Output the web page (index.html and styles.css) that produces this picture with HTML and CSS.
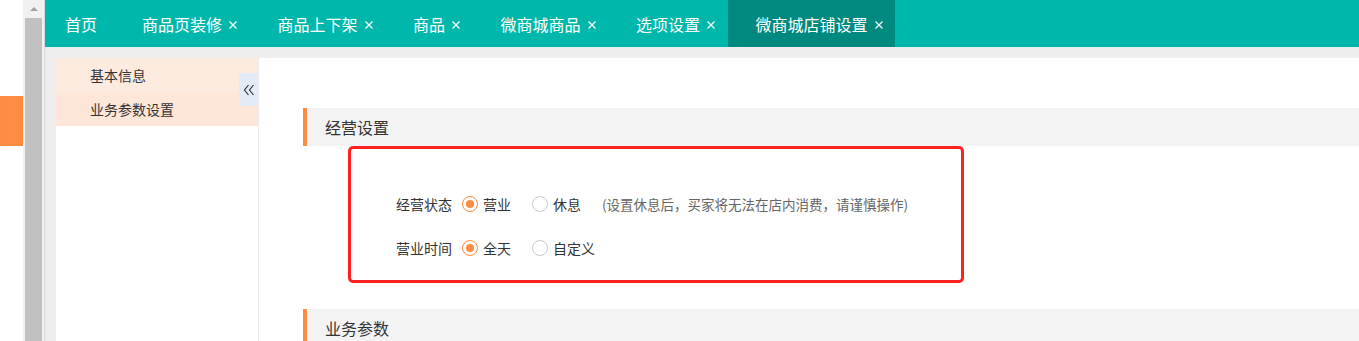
FILE: index.html
```html
<!DOCTYPE html>
<html lang="zh-CN">
<head>
    <meta charset="UTF-8">
    <meta name="viewport" content="width=device-width, initial-scale=1.0">
    <title>微商城店铺设置</title>
    <link rel="stylesheet" href="styles.css">
</head>
<body>
    <div class="page">
        <!-- outer frame edge -->
        <div class="rail">
            <div class="rail-mark"></div>
        </div>
        <div class="scrollbar">
            <div class="scroll-arrow"></div>
            <div class="scroll-thumb"></div>
        </div>

        <div class="main">
            <nav class="tabs">
                <div class="tab home">首页</div>
                <div class="tab">商品页装修<svg class="close" viewBox="0 0 8 8"><path d="M0.5 0.5 7.5 7.5 M7.5 0.5 0.5 7.5"/></svg></div>
                <div class="tab">商品上下架<svg class="close" viewBox="0 0 8 8"><path d="M0.5 0.5 7.5 7.5 M7.5 0.5 0.5 7.5"/></svg></div>
                <div class="tab">商品<svg class="close" viewBox="0 0 8 8"><path d="M0.5 0.5 7.5 7.5 M7.5 0.5 0.5 7.5"/></svg></div>
                <div class="tab">微商城商品<svg class="close" viewBox="0 0 8 8"><path d="M0.5 0.5 7.5 7.5 M7.5 0.5 0.5 7.5"/></svg></div>
                <div class="tab">选项设置<svg class="close" viewBox="0 0 8 8"><path d="M0.5 0.5 7.5 7.5 M7.5 0.5 0.5 7.5"/></svg></div>
                <div class="tab active">微商城店铺设置<svg class="close" viewBox="0 0 8 8"><path d="M0.5 0.5 7.5 7.5 M7.5 0.5 0.5 7.5"/></svg></div>
            </nav>

            <div class="workspace">
                <aside class="sidebar">
                    <div class="side-item">基本信息</div>
                    <div class="side-item current">业务参数设置</div>
                    <div class="collapse">
                        <svg viewBox="0 0 12 12"><path d="M5.5 1 1.5 6 5.5 11 M10.5 1 6.5 6 10.5 11"/></svg>
                    </div>
                </aside>

                <section class="content">
                    <div class="section-head">经营设置</div>

                    <div class="highlight">
                        <div class="form-row">
                            <span class="label">经营状态</span>
                            <span class="radio checked"></span><span class="option">营业</span>
                            <span class="radio"></span><span class="option">休息</span>
                            <span class="hint">(设置休息后，买家将无法在店内消费，请谨慎操作)</span>
                        </div>
                        <div class="form-row">
                            <span class="label">营业时间</span>
                            <span class="radio checked"></span><span class="option">全天</span>
                            <span class="radio"></span><span class="option">自定义</span>
                        </div>
                    </div>

                    <div class="section-head">业务参数</div>
                </section>
            </div>
        </div>
    </div>
</body>
</html>
```

FILE: styles.css
```css
body {
    margin: 0;
    font-family: "Noto Sans CJK SC", "Noto Sans", sans-serif;
    color: #333;
    background: #fff;
}

.page {
    display: flex;
    height: 341px;
    overflow: hidden;
}

.rail {
    width: 23px;
    background: #fff;
}

.rail-mark {
    margin-top: 96px;
    height: 50px;
    background: #ff8c40;
}

.scrollbar {
    width: 17px;
    padding: 0 2px;
    background: #f1f1f1;
    border-right: 1px solid #dadada;
    display: flex;
    flex-direction: column;
}

.scroll-arrow {
    height: 18px;
    display: flex;
    align-items: center;
    justify-content: center;
}

.scroll-arrow::before {
    content: "";
    border-left: 4px solid transparent;
    border-right: 4px solid transparent;
    border-bottom: 4px solid #a3a3a3;
}

.scroll-thumb {
    flex: 1;
    background: #c1c1c1;
}

.main {
    flex: 1;
    display: flex;
    flex-direction: column;
    background: #eee;
    min-width: 0;
}

/* tab strip */
.tabs {
    flex-shrink: 0;
    height: 47px;
    display: flex;
    background: #00b7ac;
    color: #fff;
    font-size: 16px;
}

.tab {
    display: flex;
    align-items: center;
    padding: 0 12.5px 0 28px;
    white-space: nowrap;
}

.tab.home {
    padding: 0 17px 0 20px;
}

.tab.active {
    background: #00897f;
}

.close {
    width: 8px;
    height: 8px;
    margin-left: 7px;
    margin-top: 2px;
    stroke: #fff;
    stroke-width: 1.2;
    fill: none;
}

.workspace {
    flex: 1;
    min-height: 0;
    display: flex;
    padding: 11px 0 0 11px;
}

/* left menu */
.sidebar {
    position: relative;
    width: 202px;
    flex-shrink: 0;
    background: #fff;
    border-right: 1px solid #eaeaea;
    font-size: 14px;
}

.side-item {
    height: 34px;
    line-height: 34px;
    padding-left: 34px;
    background: #feebe0;
}

.side-item.current {
    background: #fee6d8;
}

.collapse {
    position: absolute;
    left: 183px;
    top: 15px;
    width: 19px;
    height: 33px;
    background: #e3ebf7;
    display: flex;
    align-items: center;
    justify-content: center;
}

.collapse svg {
    width: 12px;
    height: 12px;
    stroke: #333;
    stroke-width: 1.2;
    fill: none;
}

/* main form */
.content {
    flex: 1;
    background: #fff;
    padding: 50px 0 0 44px;
}

.section-head {
    height: 38px;
    line-height: 38px;
    background: #f3f3f3;
    border-left: 4px solid #ff8c40;
    padding-left: 18px;
    font-size: 16px;
    color: #333;
}

.highlight {
    width: 565px;
    margin: 0 0 26px 45px;
    padding: 40px 0 17px 45px;
    border: 3px solid #ff2020;
    border-radius: 5px;
    font-size: 14px;
}

.form-row {
    height: 30px;
    display: flex;
    align-items: center;
}

.form-row + .form-row {
    margin-top: 14px;
}

.label {
    margin-right: 10px;
}

.radio {
    flex-shrink: 0;
    width: 14px;
    height: 14px;
    border: 1px solid #c9c9c9;
    border-radius: 50%;
    margin-right: 5px;
    position: relative;
}

.radio.checked {
    border-color: #ff8c40;
}

.radio.checked::after {
    content: "";
    position: absolute;
    left: 3px;
    top: 3px;
    width: 8px;
    height: 8px;
    border-radius: 50%;
    background: #ff8c40;
}

.option {
    margin-right: 21px;
}

.hint {
    color: #666;
    font-size: 13.5px;
}
```
